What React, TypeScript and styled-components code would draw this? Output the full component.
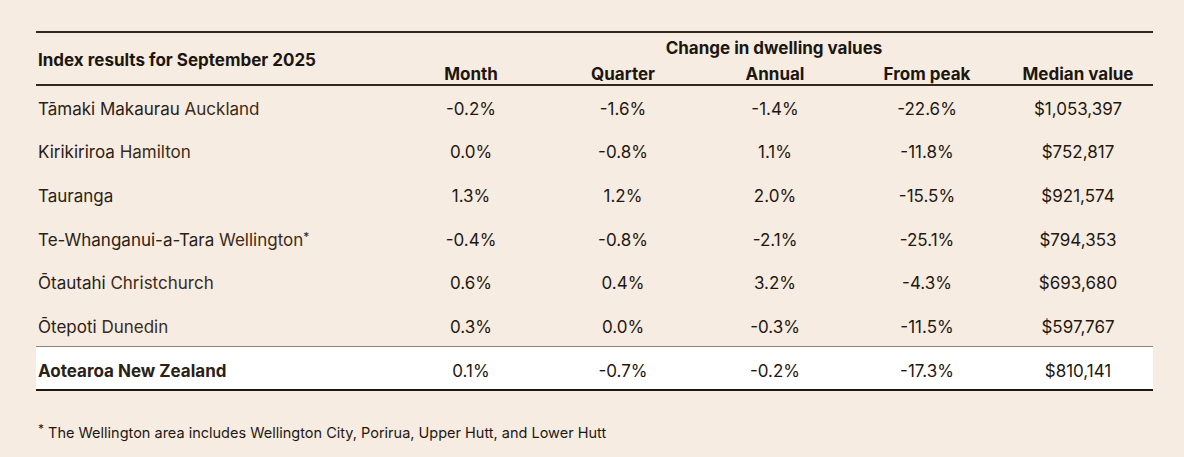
import styled, { createGlobalStyle } from 'styled-components';

const GlobalStyle = createGlobalStyle`
    html, body {
        margin: 0;
        padding: 0;
        background: #f6ece1;
    }
    body {
        font-family: Inter, 'Liberation Sans', sans-serif;
        color: #241c14;
    }
`

const Page = styled.div`
    width: 1184px;
    height: 457px;
    box-sizing: border-box;
    padding: 31px 31px 0 36px;
    background: #f6ece1;
`

const Table = styled.table`
    width: 1117px;
    border-collapse: collapse;
    border-top: 2px solid #34281d;
    border-bottom: 2px solid #1e1711;
    font-size: 17px;
`

const HeadCell = styled.th<{ $left?: boolean; $top?: number; $h?: number }>`
    font-weight: 700;
    text-align: ${props => props.$left ? 'left' : 'center'};
    padding: ${props => props.$top || 0}px ${props => props.$left ? '2px' : '0'} 0;
    height: ${props => props.$h || 26}px;
    box-sizing: border-box;
    vertical-align: middle;
    color: #1c1610;
`

const HeadRow = styled.tr<{ $last?: boolean }>`
    border-bottom: ${props => props.$last ? '2px solid #34281d' : 'none'};
`

const Row = styled.tr<{ $total?: boolean }>`
    background: ${props => props.$total ? '#ffffff' : 'transparent'};
    border-top: ${props => props.$total ? '1px solid #8d8379' : 'none'};
`

const Cell = styled.td<{ $left?: boolean; $bold?: boolean; $total?: boolean }>`
    height: ${props => props.$total ? 43.5 : 43.6}px;
    box-sizing: border-box;
    text-align: ${props => props.$left ? 'left' : 'center'};
    padding: ${props => props.$total ? 5 : 4}px ${props => props.$left ? '2px' : '0'} 0;
    font-weight: ${props => props.$bold ? 700 : 400};
    color: ${props => props.$left ? '#2a2117' : '#1f1812'};
`

const English = styled.span`
    color: #3b2a17;
`

const Sup = styled.sup`
    font-size: 12px;
    vertical-align: 5px;
    line-height: 0;
`

const Footnote = styled.p`
    margin: 33px 0 0 2px;
    font-size: 14.5px;
    color: #1f1812;
`

type Item = {
    maori?: string
    name: string
    star?: boolean
    values: string[]
}

const rows: Item[] = [
    { maori: 'Tāmaki Makaurau', name: 'Auckland', values: ['-0.2%', '-1.6%', '-1.4%', '-22.6%', '$1,053,397'] },
    { maori: 'Kirikiriroa', name: 'Hamilton', values: ['0.0%', '-0.8%', '1.1%', '-11.8%', '$752,817'] },
    { name: 'Tauranga', values: ['1.3%', '1.2%', '2.0%', '-15.5%', '$921,574'] },
    { maori: 'Te-Whanganui-a-Tara', name: 'Wellington', star: true, values: ['-0.4%', '-0.8%', '-2.1%', '-25.1%', '$794,353'] },
    { maori: 'Ōtautahi', name: 'Christchurch', values: ['0.6%', '0.4%', '3.2%', '-4.3%', '$693,680'] },
    { maori: 'Ōtepoti', name: 'Dunedin', values: ['0.3%', '0.0%', '-0.3%', '-11.5%', '$597,767'] },
]

const total = ['0.1%', '-0.7%', '-0.2%', '-17.3%', '$810,141']

const columns = ['Month', 'Quarter', 'Annual', 'From peak', 'Median value']

export default function App() {
    return (
        <>
            <GlobalStyle />
            <Page>
                <Table>
                    <colgroup>
                        <col style={{ width: 359 }} />
                        <col style={{ width: 152 }} />
                        <col style={{ width: 152 }} />
                        <col style={{ width: 152 }} />
                        <col style={{ width: 152 }} />
                        <col style={{ width: 150 }} />
                    </colgroup>
                    <thead>
                        <HeadRow>
                            <HeadCell $left rowSpan={2} $top={2}>Index results for September 2025</HeadCell>
                            <HeadCell colSpan={5} $h={27} $top={3}>Change in dwelling values</HeadCell>
                        </HeadRow>
                        <HeadRow $last>
                            {columns.map(c => (
                                <HeadCell key={c} $top={5}>{c}</HeadCell>
                            ))}
                        </HeadRow>
                    </thead>
                    <tbody>
                        {rows.map(r => (
                            <Row key={r.name}>
                                <Cell $left>
                                    {r.maori ? r.maori + ' ' : ''}
                                    {r.maori ? <English>{r.name}</English> : r.name}
                                    {r.star && <Sup>*</Sup>}
                                </Cell>
                                {r.values.map((v, i) => <Cell key={i}>{v}</Cell>)}
                            </Row>
                        ))}
                        <Row $total>
                            <Cell $left $bold $total>Aotearoa New Zealand</Cell>
                            {total.map((v, i) => (
                                <Cell key={i} $total>{v}</Cell>
                            ))}
                        </Row>
                    </tbody>
                </Table>
                <Footnote><Sup>*</Sup> The Wellington area includes Wellington City, Porirua, Upper Hutt, and Lower Hutt</Footnote>
            </Page>
        </>
    )
}
